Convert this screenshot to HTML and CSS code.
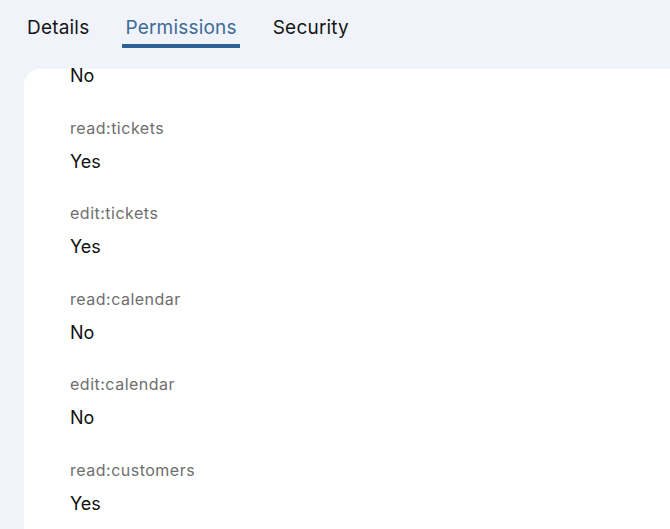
FILE: index.html
```html
<!DOCTYPE html>
<html lang="en">
<head>
    <meta charset="UTF-8">
    <meta name="viewport" content="width=device-width, initial-scale=1.0">
    <title>User Permissions</title>
    <link rel="stylesheet" href="styles.css">
</head>
<body>

    <nav class="tabs">
        <div class="tab">Details</div>
        <div class="tab active">Permissions</div>
        <div class="tab">Security</div>
    </nav>

    <div class="card">
        <div class="perm-list">
            <div class="perm first">
                <div class="perm-value">No</div>
            </div>
            <div class="perm">
                <div class="perm-name">read:tickets</div>
                <div class="perm-value">Yes</div>
            </div>
            <div class="perm">
                <div class="perm-name">edit:tickets</div>
                <div class="perm-value">Yes</div>
            </div>
            <div class="perm">
                <div class="perm-name">read:calendar</div>
                <div class="perm-value">No</div>
            </div>
            <div class="perm">
                <div class="perm-name">edit:calendar</div>
                <div class="perm-value">No</div>
            </div>
            <div class="perm">
                <div class="perm-name">read:customers</div>
                <div class="perm-value">Yes</div>
            </div>
        </div>
    </div>

</body>
</html>
```

FILE: styles.css
```css
* {
    margin: 0;
    padding: 0;
    box-sizing: border-box;
}
html, body {
    height: 100%;
    overflow: hidden;
}
body {
    background-color: #f0f3fa;
    font-family: Inter, "Open Sans", sans-serif;
    color: #111;
}
.tabs {
    display: flex;
    gap: 30px;
    padding: 16px 0 0 24px;
}
.tab {
    font-size: 19px;
    line-height: 24px;
    letter-spacing: 0.2px;
    padding: 0 3px 4px;
    border-bottom: 4px solid transparent;
    color: #161616;
}
.tab.active {
    color: #3d6b98;
    border-bottom-color: #2f6296;
}
.card {
    background-color: #fff;
    margin: 21px -20px 0 24px;
    border-radius: 16px 0 0 0;
    height: 100%;
}
.perm-list {
    padding-left: 46px;
}
.perm {
    padding-top: 27.5px;
}
.perm.first {
    padding-top: 0;
    padding-bottom: 5px;
}
.perm.first .perm-value {
    line-height: 14px;
}
.perm-name {
    font-size: 16px;
    line-height: 24px;
    letter-spacing: 0.5px;
    color: #6e6e6e;
    margin-bottom: 10px;
}
.perm-value {
    font-size: 18px;
    line-height: 24px;
    color: #111;
}
```
